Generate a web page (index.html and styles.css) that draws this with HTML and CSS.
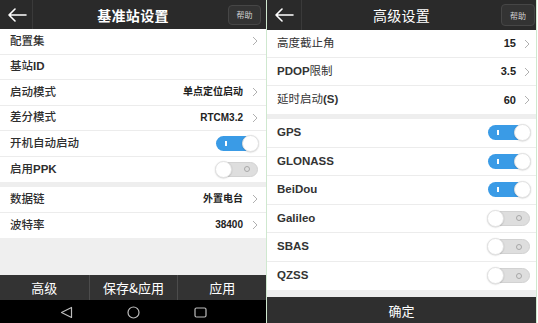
FILE: index.html
```html
<!DOCTYPE html>
<html lang="zh-CN">
<head>
<meta charset="utf-8">
<title>基准站设置</title>
<link rel="stylesheet" href="styles.css">
</head>
<body>
<div class="page">
  <div class="screen left">
    <header class="bar bar-l">
      <div class="back"><svg width="20" height="14" viewBox="0 0 20 14"><path d="M19 7H2M8 1L2 7L8 13" fill="none" stroke="#fff" stroke-width="1.6" stroke-linecap="round" stroke-linejoin="round"/></svg></div>
      <div class="title bold">基准站设置</div>
      <div class="help-wrap"><span class="help">帮助</span></div>
    </header>
    <div class="group">
      <div class="row row-l"><span class="label ll">配置集</span><span class="value"></span><svg class="chev" width="6" height="10" viewBox="0 0 6 10"><path d="M1 1L5 5L1 9" fill="none" stroke="#b0b0b0" stroke-width="1"/></svg></div>
      <div class="row row-l"><span class="label ll">基站<b>ID</b></span></div>
      <div class="row row-l"><span class="label ll">启动模式</span><span class="value vl">单点定位启动</span><svg class="chev" width="6" height="10" viewBox="0 0 6 10"><path d="M1 1L5 5L1 9" fill="none" stroke="#b0b0b0" stroke-width="1"/></svg></div>
      <div class="row row-l"><span class="label ll">差分模式</span><span class="value vl">RTCM3.2</span><svg class="chev" width="6" height="10" viewBox="0 0 6 10"><path d="M1 1L5 5L1 9" fill="none" stroke="#b0b0b0" stroke-width="1"/></svg></div>
      <div class="row row-l"><span class="label ll">开机自动启动</span><span class="toggle on"><i class="mark"></i><i class="knob"></i></span></div>
      <div class="row row-l last"><span class="label ll">启用<b>PPK</b></span><span class="toggle off"><i class="knob"></i><i class="mark"></i></span></div>
    </div>
    <div class="gap gap-l"></div>
    <div class="group">
      <div class="row row-l"><span class="label ll">数据链</span><span class="value vl">外置电台</span><svg class="chev" width="6" height="10" viewBox="0 0 6 10"><path d="M1 1L5 5L1 9" fill="none" stroke="#b0b0b0" stroke-width="1"/></svg></div>
      <div class="row row-l last"><span class="label ll">波特率</span><span class="value vl">38400</span><svg class="chev" width="6" height="10" viewBox="0 0 6 10"><path d="M1 1L5 5L1 9" fill="none" stroke="#b0b0b0" stroke-width="1"/></svg></div>
    </div>
    <div class="fill"></div>
    <div class="actions">
      <span class="act">高级</span>
      <span class="act">保存&amp;应用</span>
      <span class="act">应用</span>
    </div>
    <div class="nav">
      <svg width="13" height="13" viewBox="0 0 13 13"><path d="M11.5 1.5V11.5L1.5 6.5Z" fill="none" stroke="#bdbdbd" stroke-width="1.2" stroke-linejoin="round"/></svg>
      <svg width="13" height="13" viewBox="0 0 13 13"><circle cx="6.5" cy="6.5" r="5.5" fill="none" stroke="#bdbdbd" stroke-width="1.2"/></svg>
      <svg width="13" height="13" viewBox="0 0 13 13"><rect x="1" y="2" width="11" height="9" rx="1.5" fill="none" stroke="#bdbdbd" stroke-width="1.2"/></svg>
    </div>
  </div>
  <div class="divider"></div>
  <div class="screen right">
    <header class="bar bar-r">
      <div class="back back-r"><svg width="20" height="14" viewBox="0 0 20 14"><path d="M19 7H2M8 1L2 7L8 13" fill="none" stroke="#fff" stroke-width="1.6" stroke-linecap="round" stroke-linejoin="round"/></svg></div>
      <div class="title">高级设置</div>
      <div class="help-wrap"><span class="help help-r">帮助</span></div>
    </header>
    <div class="group">
      <div class="row row-r"><span class="label lr">高度截止角</span><span class="value vr">15</span><svg class="chev" width="6" height="10" viewBox="0 0 6 10"><path d="M1 1L5 5L1 9" fill="none" stroke="#b0b0b0" stroke-width="1"/></svg></div>
      <div class="row row-r"><span class="label lr"><b>PDOP</b>限制</span><span class="value vr">3.5</span><svg class="chev" width="6" height="10" viewBox="0 0 6 10"><path d="M1 1L5 5L1 9" fill="none" stroke="#b0b0b0" stroke-width="1"/></svg></div>
      <div class="row row-r last"><span class="label lr">延时启动<b>(S)</b></span><span class="value vr">60</span><svg class="chev" width="6" height="10" viewBox="0 0 6 10"><path d="M1 1L5 5L1 9" fill="none" stroke="#b0b0b0" stroke-width="1"/></svg></div>
    </div>
    <div class="gap gap-r1"></div>
    <div class="group">
      <div class="row row-s"><span class="label lr"><b>GPS</b></span><span class="toggle on"><i class="mark"></i><i class="knob"></i></span></div>
      <div class="row row-s"><span class="label lr"><b>GLONASS</b></span><span class="toggle on"><i class="mark"></i><i class="knob"></i></span></div>
      <div class="row row-s"><span class="label lr"><b>BeiDou</b></span><span class="toggle on"><i class="mark"></i><i class="knob"></i></span></div>
      <div class="row row-s"><span class="label lr"><b>Galileo</b></span><span class="toggle off"><i class="knob"></i><i class="mark"></i></span></div>
      <div class="row row-s"><span class="label lr"><b>SBAS</b></span><span class="toggle off"><i class="knob"></i><i class="mark"></i></span></div>
      <div class="row row-s last"><span class="label lr"><b>QZSS</b></span><span class="toggle off"><i class="knob"></i><i class="mark"></i></span></div>
    </div>
    <div class="gap gap-r2"></div>
    <div class="confirm">确定</div>
  </div>
  <div class="edge"></div>
</div>
</body>
</html>
```

FILE: styles.css
```css
* { box-sizing: border-box; }
html, body { margin: 0; padding: 0; }
body {
  width: 538px;
  height: 323px;
  overflow: hidden;
  background: #ffffff;
  font-family: "Liberation Sans", "Noto Sans CJK SC", sans-serif;
  color: #333;
}
b { font-weight: 700; }
.bold { font-weight: 700; }
.page { display: flex; height: 323px; }
.screen { display: flex; flex-direction: column; height: 323px; background: #efefef; }
.left { width: 266px; }
.right { width: 269px; }
.divider { width: 1px; background: #cfe8cf; }
.edge { width: 1px; background: #cfe8cf; }

.bar {
  display: grid;
  grid-template-columns: 1fr auto 1fr;
  align-items: center;
  background: #2a2a2a;
  color: #fff;
}
.bar-l { height: 29px; }
.bar-r { height: 30px; }
.back {
  width: 33px;
  height: 100%;
  display: flex;
  align-items: center;
  padding-left: 7px;
  border-right: 1px solid #3a3a3a;
}
.back-r { width: 35px; padding-left: 7px; }
.title {
  font-family: "Noto Sans CJK SC", sans-serif;
  font-size: 14px;
  line-height: 1;
  color: #fff;
  letter-spacing: 0.3px;
}
.help-wrap { display: flex; justify-content: flex-end; padding-right: 5px; }
.help {
  display: flex;
  align-items: center;
  justify-content: center;
  width: 33px;
  height: 20px;
  border-radius: 4px;
  background: #333;
  border: 1px solid #464646;
  font-family: "Noto Sans CJK SC", sans-serif;
  font-size: 8px;
  color: #d0d0d0;
}
.help-r { width: 34px; height: 22px; margin-right: -4px; }

.group { background: #fff; }
.row {
  display: flex;
  align-items: center;
  border-bottom: 1px solid #ececec;
  background: #fff;
}
.row.last { border-bottom: none; }
.row-l { height: 25.5px; padding: 0 8px 0 10px; }
.row-r { height: 28px; padding: 0 6px 0 10px; }
.row-s { height: 28.5px; padding: 0 6px 0 10px; }
.label {
  flex: 1;
  font-family: "Liberation Sans", "Noto Sans CJK SC", sans-serif;
  font-size: 11.5px;
  color: #333;
  line-height: 1;
}
.ll { font-weight: 500; color: #2e2e2e; }
.ll b { font-weight: 700; }
.lr { font-size: 11.5px; }
.value {
  font-family: "Liberation Sans", "Noto Sans CJK SC", sans-serif;
  font-weight: 700;
  color: #222;
  line-height: 1;
}
.vl { font-size: 10px; margin-right: 9px; }
.vr { font-size: 11px; margin-right: 8px; }
.chev { display: block; flex: none; }

.toggle {
  position: relative;
  display: flex;
  align-items: center;
  width: 42px;
  height: 15px;
  border-radius: 8px;
  flex: none;
}
.toggle.on { background: #3a9be6; justify-content: space-between; }
.toggle.off { background: #dedede; border: 1px solid #d2d2d2; justify-content: space-between; }
.toggle .knob {
  width: 17px;
  height: 17px;
  border-radius: 50%;
  background: #fff;
  border: 1px solid #e2e2e2;
  box-shadow: 0 0.5px 1.5px rgba(0,0,0,0.2);
}
.toggle.on .knob { margin-right: -1px; }
.toggle.off .knob { margin-left: -2px; }
.toggle.on .mark {
  width: 1.5px;
  height: 5px;
  background: #fff;
  margin-left: 9px;
}
.toggle.off .mark {
  width: 6px;
  height: 6px;
  border-radius: 50%;
  border: 1px solid #a8a8a8;
  margin-right: 7px;
}

.gap { background: #eeeeee; }
.gap-l { height: 5px; }
.gap-r1 { height: 5px; }
.gap-r2 { height: 7px; }
.fill { flex: 1; background: #efefef; }

.actions {
  height: 25px;
  display: grid;
  grid-template-columns: 1fr 1fr 1fr;
  background: #333;
}
.act {
  display: flex;
  align-items: center;
  justify-content: center;
  font-family: "Noto Sans CJK SC", sans-serif;
  font-size: 13px;
  color: #fff;
  border-left: 1px solid #4c4c4c;
}
.act:first-child { border-left: none; }
.nav {
  height: 23px;
  background: #000;
  display: flex;
  align-items: center;
  justify-content: center;
  gap: 54px;
  padding-top: 2px;
}
.nav svg { display: block; }
.confirm {
  height: 26px;
  background: #2f2f2f;
  color: #fff;
  display: flex;
  align-items: center;
  justify-content: center;
  font-family: "Noto Sans CJK SC", sans-serif;
  font-size: 13px;
}
```
